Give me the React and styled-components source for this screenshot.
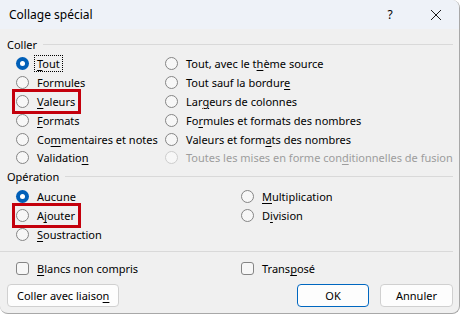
import React from "react";
import styled, { createGlobalStyle, css } from "styled-components";

const GlobalStyle = createGlobalStyle`
  html, body {
    margin: 0;
    padding: 0;
    background: #ffffff;
  }
  body {
    font-family: "Noto Sans", "Open Sans", sans-serif;
    font-size: 11px;
    color: #000;
  }
`;

const Dialog = styled.div`
  width: 459px;
  height: 313px;
  background: #f0f0f0;
  border-right: 1px solid #a8a8a8;
  border-bottom: 1px solid #a8a8a8;
  border-radius: 0 8px 8px 8px;
  overflow: hidden;
  display: flex;
  flex-direction: column;
`;

const TitleBar = styled.div`
  height: 29px;
  flex: none;
  background: #eef2f8;
  display: flex;
  align-items: center;
  padding-left: 9px;
`;

const Title = styled.div`
  flex: 1;
  font-size: 12px;
`;

const TitleButton = styled.div`
  width: 46px;
  height: 29px;
  display: flex;
  align-items: center;
  justify-content: center;
  font-size: 12px;
`;

const Body = styled.div`
  padding: 7px 6px 0 7px;
  display: flex;
  flex-direction: column;
`;

const Legend = styled.div`
  display: flex;
  align-items: center;
  height: 16px;
  margin-top: ${(p) => p.$top || 0}px;
`;

const LegendLine = styled.div`
  flex: 1;
  height: 1px;
  background: #d9d9d9;
  margin-left: 6px;
`;

const OptionGrid = styled.div`
  display: grid;
  grid-template-columns: ${(p) => p.$col}px 1fr;
  grid-auto-rows: ${(p) => p.$row}px;
  padding-left: 9px;
  margin-top: ${(p) => p.$top}px;
`;

const Option = styled.label`
  position: relative;
  display: flex;
  align-items: center;
  gap: 7px;
  justify-self: start;
  color: ${(p) => (p.$disabled ? "#9d9d9d" : "#000")};
  white-space: nowrap;
  ${(p) =>
    p.$highlight &&
    css`
      &::before {
        content: "";
        position: absolute;
        left: -4px;
        right: -3px;
        top: -3px;
        bottom: -3px;
        border: 3px solid #c4000c;
      }
    `}
`;

const Radio = styled.span`
  width: 13px;
  height: 13px;
  box-sizing: border-box;
  border-radius: 50%;
  flex: none;
  position: relative;
  border: 1px solid ${(p) => (p.$disabled ? "#cdcdcd" : "#858585")};
  background: #f7f7f7;
  ${(p) =>
    p.$checked &&
    css`
      border: none;
      background: #005fb8;
      &::after {
        content: "";
        position: absolute;
        width: 5px;
        height: 5px;
        left: 4px;
        top: 4px;
        border-radius: 50%;
        background: #fff;
      }
    `}
`;

const Check = styled.span`
  width: 13px;
  height: 13px;
  box-sizing: border-box;
  border-radius: 3px;
  flex: none;
  border: 1px solid #858585;
  background: #f7f7f7;
`;

const Text = styled.span`
  padding: 1px 2px;
  margin-left: -2px;
  border: 1px dotted ${(p) => (p.$focus ? "#000" : "transparent")};
  line-height: 13px;
  u {
    text-underline-offset: 2px;
  }
`;

const Separator = styled.div`
  height: 1px;
  background: #d9d9d9;
  margin: 7px 0 0 -7px;
`;

const ButtonRow = styled.div`
  display: flex;
  align-items: center;
  margin-top: 6px;
`;

const Button = styled.div`
  height: 23px;
  box-sizing: border-box;
  display: flex;
  align-items: center;
  justify-content: center;
  padding: 0 9px;
  min-width: ${(p) => p.$width || 0}px;
  margin-left: ${(p) => p.$left || 0}px;
  background: #fdfdfd;
  border: 1px solid ${(p) => (p.$primary ? "#0067c0" : "#d0d0d0")};
  border-radius: 4px;
  u {
    text-underline-offset: 2px;
  }
`;

const Spacer = styled.div`
  flex: 1;
`;

function Label({ text }) {
  const i = text.indexOf("&");
  if (i < 0) return text;
  return (
    <>
      {text.slice(0, i)}
      <u>{text[i + 1]}</u>
      {text.slice(i + 2)}
    </>
  );
}

function RadioOption({ text, checked, disabled, highlight, focus }) {
  return (
    <Option $disabled={disabled} $highlight={highlight}>
      <Radio $checked={checked} $disabled={disabled} />
      <Text $focus={focus}>
        <Label text={text} />
      </Text>
    </Option>
  );
}

function CheckOption({ text }) {
  return (
    <Option>
      <Check />
      <Text>
        <Label text={text} />
      </Text>
    </Option>
  );
}

const coller = [
  ["&Tout", "Tout, avec le t&hème source"],
  ["&Formules", "Tout sauf la bordur&e"],
  ["&Valeurs", "Lar&geurs de colonnes"],
  ["&Formats", "Fo&rmules et formats des nombres"],
  ["Co&mmentaires et notes", "Valeurs et form&ats des nombres"],
  ["Validatio&n", "Toutes les mises en forme con&ditionnelles de fusion"],
];

export default function App() {
  return (
    <>
      <GlobalStyle />
      <Dialog>
        <TitleBar>
          <Title>Collage spécial</Title>
          <TitleButton>?</TitleButton>
          <TitleButton>
            <svg width="12" height="12" viewBox="0 0 12 12">
              <path d="M1 1 L11 11 M11 1 L1 11" stroke="#1a1a1a" strokeWidth="1" />
            </svg>
          </TitleButton>
        </TitleBar>
        <Body>
          <Legend>
            Coller
            <LegendLine />
          </Legend>
          <OptionGrid $col={149} $row={18.8} $top={2.6}>
            {coller.map(([a, b], i) => (
              <React.Fragment key={i}>
                <RadioOption
                  text={a}
                  checked={i === 0}
                  focus={i === 0}
                  highlight={i === 2}
                />
                <RadioOption text={b} disabled={i === 5} />
              </React.Fragment>
            ))}
          </OptionGrid>
          <Legend $top={1.6}>
            Opération
            <LegendLine />
          </Legend>
          <OptionGrid $col={225} $row={19} $top={2.5}>
            <RadioOption text="Au&cune" checked />
            <RadioOption text="&Multiplication" />
            <RadioOption text="A&jouter" highlight />
            <RadioOption text="D&ivision" />
            <RadioOption text="&Soustraction" />
          </OptionGrid>
          <Separator />
          <OptionGrid $col={225} $row={19} $top={7}>
            <CheckOption text="&Blancs non compris" />
            <CheckOption text="Trans&posé" />
          </OptionGrid>
          <ButtonRow>
            <Button $width={110}>
              <Label text="Coller avec liaiso&n" />
            </Button>
            <Spacer />
            <Button $width={72} $primary>
              OK
            </Button>
            <Button $width={73} $left={11}>
              Annuler
            </Button>
          </ButtonRow>
        </Body>
      </Dialog>
    </>
  );
}
